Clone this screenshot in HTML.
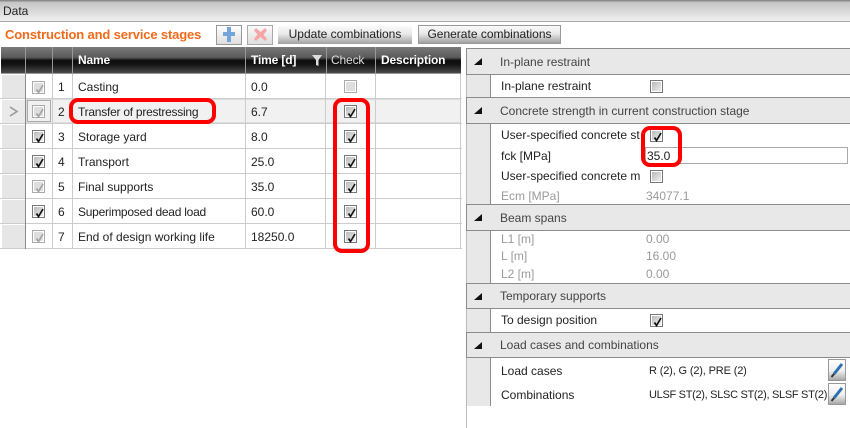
<!DOCTYPE html>
<html><head><meta charset="utf-8">
<style>
html,body{margin:0;padding:0;background:#fff}
#p{position:relative;width:850px;height:428px;overflow:hidden;background:#fff;font-family:"Liberation Sans",sans-serif;font-size:12px;color:#222}
#p div{position:absolute;box-sizing:border-box}
.t{white-space:nowrap;line-height:16px;height:16px}
.n{letter-spacing:-.25px}
.g{color:#9a9a9a}
.hd{background:linear-gradient(#7a7a7a 0,#5a5a5a 40%,#0c0c0c 52%,#151515 68%,#4a4a4a 100%);height:26px;top:47px}
.ht{color:#fff;font-weight:bold;top:52px;font-size:12px;letter-spacing:-.15px}
.sh{left:466px;width:384px;background:#e8e8e8;border:1px solid #8c8c8c;border-right:0}
.st{left:500px;color:#444}
.tr{left:474px;width:0;height:0;border-style:solid;border-width:0 0 7px 8px;border-color:transparent transparent #111 transparent}
.cb{width:13px;height:13px;border:1px solid #777;background:linear-gradient(135deg,#b4b4b4,#f4f4f4);box-shadow:inset 0 0 0 1px #fff}
.cb.d{border-color:#aaa;background:#dedede}
.cb svg{position:absolute;left:1px;top:1px}
.btn{background:linear-gradient(#fafafa 0,#e8e8e8 45%,#a0a0a0 100%);height:18px;top:26px;text-align:center;line-height:17px;font-size:12px;color:#222}
.red{border:4px solid #f00;border-radius:9px}
.pen{width:18px;height:22px;left:828px;border:1px solid #999;background:linear-gradient(#fff 0,#eee 55%,#a8a8a8 100%)}
</style></head><body>
<div id="p">
<div style="left:0;top:0;width:850px;height:22px;background:linear-gradient(#8a8a8a 0,#8a8a8a 1px,#c4c4c4 2px,#f0f0f0 100%);border-bottom:1px solid #a8a8a8"></div>
<div class="t" style="left:3px;top:3px;font-size:12px">Data</div>
<div class="t" style="left:5px;top:27px;color:#f26a1b;font-weight:bold;font-size:13px;letter-spacing:-.15px">Construction and service stages</div>

<div style="left:216px;top:25px;width:26px;height:20px;border:1px solid #999;background:linear-gradient(#fff,#ddd)"><svg width="24" height="18" style="position:absolute;left:0;top:0"><path d="M10 1h4v5h4v4h-4v6h-4v-6H6V6h4z" fill="#74a5d8"/></svg></div>
<div style="left:247px;top:25px;width:26px;height:20px;border:1px solid #aaa;background:linear-gradient(#fafafa,#ddd)"><svg width="24" height="18" style="position:absolute;left:0;top:0"><path d="M8 2l4.500 4L17 2l2 2.500L15.500 8.500 19 13l-2 2-4.500-4L8 15l-2-2 3.500-4.500L6 4.500z" fill="#f4a6a6"/></svg></div>
<div class="btn" style="left:278px;width:134px">Update combinations</div>
<div class="btn" style="left:418px;width:143px;height:19px;top:25px;border:1px solid #999">Generate combinations</div>

<div style="left:1px;top:47px;width:460px;height:27px;background:#999"></div>
<div class="hd" style="left:1px;width:24px"></div>
<div class="hd" style="left:26px;width:26px"></div>
<div class="hd" style="left:53px;width:19px"></div>
<div class="hd" style="left:73px;width:172px"></div>
<div class="hd" style="left:246px;width:80px"></div>
<div class="hd" style="left:327px;width:48px"></div>
<div class="hd" style="left:376px;width:85px"></div>
<div class="t ht" style="left:78px">Name</div>
<div class="t ht" style="left:251px">Time [d]</div>
<svg width="11" height="12" style="position:absolute;left:312px;top:55px"><path d="M0 0h10L6.500 5v6L4 10V5z" fill="#ddd"/></svg>
<div class="t ht" style="left:331px;font-weight:normal;color:#ddd">Check</div>
<div class="t ht" style="left:381px">Description</div>

<!-- row 2 bg -->
<div style="left:26px;top:99px;width:435px;height:24px;background:#f1f1f1;border:1px solid #ddd"></div>
<!-- row selectors -->
<div style="left:2px;top:75px;width:23px;height:23px;background:#e6e6e6"></div>
<div style="left:2px;top:100px;width:23px;height:23px;background:#eaeaea"></div>
<div style="left:2px;top:125px;width:23px;height:23px;background:#e6e6e6"></div>
<div style="left:2px;top:150px;width:23px;height:23px;background:#e6e6e6"></div>
<div style="left:2px;top:175px;width:23px;height:23px;background:#e6e6e6"></div>
<div style="left:2px;top:200px;width:23px;height:23px;background:#e6e6e6"></div>
<div style="left:2px;top:225px;width:23px;height:23px;background:#e6e6e6"></div>
<svg width="10" height="12" style="position:absolute;left:9px;top:106px"><path d="M1 1l7 4.500L1 10" fill="none" stroke="#999" stroke-width="1.6"/></svg>
<div style="left:27px;top:100px;width:24px;height:22px;border:1px solid #aaa;background:#f1f1f1"></div>

<!-- grid lines -->
<div style="left:0;top:98px;width:462px;height:1px;background:#ccc"></div>
<div style="left:0;top:123px;width:462px;height:1px;background:#ccc"></div>
<div style="left:0;top:148px;width:462px;height:1px;background:#ccc"></div>
<div style="left:0;top:173px;width:462px;height:1px;background:#ccc"></div>
<div style="left:0;top:198px;width:462px;height:1px;background:#ccc"></div>
<div style="left:0;top:223px;width:462px;height:1px;background:#ccc"></div>
<div style="left:0;top:248px;width:462px;height:1px;background:#ccc"></div>
<div style="left:25px;top:74px;width:1px;height:175px;background:#8a8a8a"></div>
<div style="left:52px;top:74px;width:1px;height:175px;background:#ccc"></div>
<div style="left:72px;top:74px;width:1px;height:175px;background:#ccc"></div>
<div style="left:245px;top:74px;width:1px;height:175px;background:#ccc"></div>
<div style="left:325px;top:74px;width:1px;height:175px;background:#ccc"></div>
<div style="left:375px;top:74px;width:1px;height:175px;background:#ccc"></div>
<div style="left:460px;top:74px;width:1px;height:175px;background:#ccc"></div>

<!-- col 2 checks -->
<div class="cb d" style="left:32px;top:81px"><svg width="11" height="11"><path d="M2.500 6.500l2 3 4.500-7.500" fill="none" stroke="#a4a4a4" stroke-width="1.700"/></svg></div>
<div class="cb d" style="left:32px;top:105px"><svg width="11" height="11"><path d="M2.500 6.500l2 3 4.500-7.500" fill="none" stroke="#a4a4a4" stroke-width="1.700"/></svg></div>
<div class="cb" style="left:32px;top:130px"><svg width="11" height="11"><path d="M2.500 6.500l2 3 4.500-7.500" fill="none" stroke="#111" stroke-width="1.700"/></svg></div>
<div class="cb" style="left:32px;top:155px"><svg width="11" height="11"><path d="M2.500 6.500l2 3 4.500-7.500" fill="none" stroke="#111" stroke-width="1.700"/></svg></div>
<div class="cb d" style="left:32px;top:180px"><svg width="11" height="11"><path d="M2.500 6.500l2 3 4.500-7.500" fill="none" stroke="#a4a4a4" stroke-width="1.700"/></svg></div>
<div class="cb" style="left:32px;top:205px"><svg width="11" height="11"><path d="M2.500 6.500l2 3 4.500-7.500" fill="none" stroke="#111" stroke-width="1.700"/></svg></div>
<div class="cb d" style="left:32px;top:230px"><svg width="11" height="11"><path d="M2.500 6.500l2 3 4.500-7.500" fill="none" stroke="#a4a4a4" stroke-width="1.700"/></svg></div>

<!-- numbers -->
<div class="t" style="left:58px;top:79px">1</div>
<div class="t" style="left:58px;top:104px">2</div>
<div class="t" style="left:58px;top:129px">3</div>
<div class="t" style="left:58px;top:154px">4</div>
<div class="t" style="left:58px;top:179px">5</div>
<div class="t" style="left:58px;top:204px">6</div>
<div class="t" style="left:58px;top:229px">7</div>

<!-- names -->
<div class="t" style="left:78px;top:79px">Casting</div>
<div class="t n" style="left:78px;top:104px">Transfer of prestressing</div>
<div class="t" style="left:78px;top:129px">Storage yard</div>
<div class="t" style="left:78px;top:154px">Transport</div>
<div class="t" style="left:78px;top:179px">Final supports</div>
<div class="t n" style="left:78px;top:204px">Superimposed dead load</div>
<div class="t" style="left:78px;top:229px">End of design working life</div>

<!-- times -->
<div class="t" style="left:251px;top:79px">0.0</div>
<div class="t" style="left:251px;top:104px">6.7</div>
<div class="t" style="left:251px;top:129px">8.0</div>
<div class="t" style="left:251px;top:154px">25.0</div>
<div class="t" style="left:251px;top:179px">35.0</div>
<div class="t" style="left:251px;top:204px">60.0</div>
<div class="t" style="left:251px;top:229px">18250.0</div>

<!-- check col -->
<div class="cb d" style="left:344px;top:80px"></div>
<div class="cb" style="left:344px;top:105px"><svg width="11" height="11"><path d="M2.500 6.500l2 3 4.500-7.500" fill="none" stroke="#111" stroke-width="1.600"/></svg></div>
<div class="cb" style="left:344px;top:130px"><svg width="11" height="11"><path d="M2.500 6.500l2 3 4.500-7.500" fill="none" stroke="#111" stroke-width="1.600"/></svg></div>
<div class="cb" style="left:344px;top:155px"><svg width="11" height="11"><path d="M2.500 6.500l2 3 4.500-7.500" fill="none" stroke="#111" stroke-width="1.600"/></svg></div>
<div class="cb" style="left:344px;top:180px"><svg width="11" height="11"><path d="M2.500 6.500l2 3 4.500-7.500" fill="none" stroke="#111" stroke-width="1.600"/></svg></div>
<div class="cb" style="left:344px;top:205px"><svg width="11" height="11"><path d="M2.500 6.500l2 3 4.500-7.500" fill="none" stroke="#111" stroke-width="1.600"/></svg></div>
<div class="cb" style="left:344px;top:230px"><svg width="11" height="11"><path d="M2.500 6.500l2 3 4.500-7.500" fill="none" stroke="#111" stroke-width="1.600"/></svg></div>

<!-- right panel -->
<div style="left:466px;top:74px;width:25px;height:332px;background:#e8e8e8"></div>
<div style="left:490px;top:74px;width:1px;height:332px;background:#8c8c8c"></div>
<div style="left:466px;top:48px;width:1px;height:380px;background:#bbb"></div>

<div class="sh" style="top:48px;height:27px"></div>
<div class="tr" style="top:58px"></div>
<div class="t st" style="top:54px">In-plane restraint</div>
<div class="t" style="left:501px;top:78px">In-plane restraint</div>
<div class="cb" style="left:650px;top:80px"></div>

<div class="sh" style="top:97px;height:27px"></div>
<div class="tr" style="top:107px"></div>
<div class="t st" style="top:103px">Concrete strength in current construction stage</div>
<div class="t" style="left:501px;top:127px;width:139px;overflow:hidden">User-specified concrete strength</div>
<div class="cb" style="left:650px;top:129px"><svg width="11" height="11"><path d="M2.500 6.500l2 3 4.500-7.500" fill="none" stroke="#111" stroke-width="1.700"/></svg></div>
<div class="t" style="left:501px;top:148px">fck [MPa]</div>
<div style="left:645px;top:147px;width:203px;height:17px;border:1px solid #aaa"></div>
<div class="t" style="left:647px;top:148px">35.0</div>
<div class="t" style="left:501px;top:168px;width:139px;overflow:hidden">User-specified concrete modulus</div>
<div class="cb" style="left:650px;top:170px"></div>
<div class="t g" style="left:501px;top:188px">Ecm [MPa]</div>
<div class="t g" style="left:646px;top:188px">34077.1</div>

<div class="sh" style="top:204px;height:27px"></div>
<div class="tr" style="top:214px"></div>
<div class="t st" style="top:210px">Beam spans</div>
<div class="t g" style="left:501px;top:231px">L1 [m]</div><div class="t g" style="left:646px;top:231px">0.00</div>
<div class="t g" style="left:501px;top:248px">L [m]</div><div class="t g" style="left:646px;top:248px">16.00</div>
<div class="t g" style="left:501px;top:266px">L2 [m]</div><div class="t g" style="left:646px;top:266px">0.00</div>

<div class="sh" style="top:283px;height:26px"></div>
<div class="tr" style="top:293px"></div>
<div class="t st" style="top:288px">Temporary supports</div>
<div class="t" style="left:501px;top:312px">To design position</div>
<div class="cb" style="left:650px;top:314px"><svg width="11" height="11"><path d="M2.500 6.500l2 3 4.500-7.500" fill="none" stroke="#111" stroke-width="1.700"/></svg></div>

<div class="sh" style="top:332px;height:26px"></div>
<div class="tr" style="top:342px"></div>
<div class="t st" style="top:337px">Load cases and combinations</div>
<div class="t" style="left:501px;top:363px">Load cases</div>
<div class="t" style="left:649px;top:363px;font-size:11px;letter-spacing:-.15px">R (2), G (2), PRE (2)</div>
<div class="pen" style="top:359px"><svg width="16" height="20"><path d="M5 14L13 4" stroke="#2f6fb0" stroke-width="3"/><path d="M2.500 17l2.500-3" stroke="#333" stroke-width="2"/></svg></div>
<div class="t" style="left:501px;top:387px">Combinations</div>
<div class="t" style="left:649px;top:387px;font-size:11px;letter-spacing:-.3px">ULSF ST(2), SLSC ST(2), SLSF ST(2)</div>
<div class="pen" style="top:383px"><svg width="16" height="20"><path d="M5 14L13 4" stroke="#2f6fb0" stroke-width="3"/><path d="M2.500 17l2.500-3" stroke="#333" stroke-width="2"/></svg></div>

<!-- red highlights -->
<div class="red" style="left:69px;top:98px;width:147px;height:26px"></div>
<div class="red" style="left:333px;top:98px;width:37px;height:155px"></div>
<div class="red" style="left:641px;top:126px;width:41px;height:41px"></div>
</div>
</body></html>
